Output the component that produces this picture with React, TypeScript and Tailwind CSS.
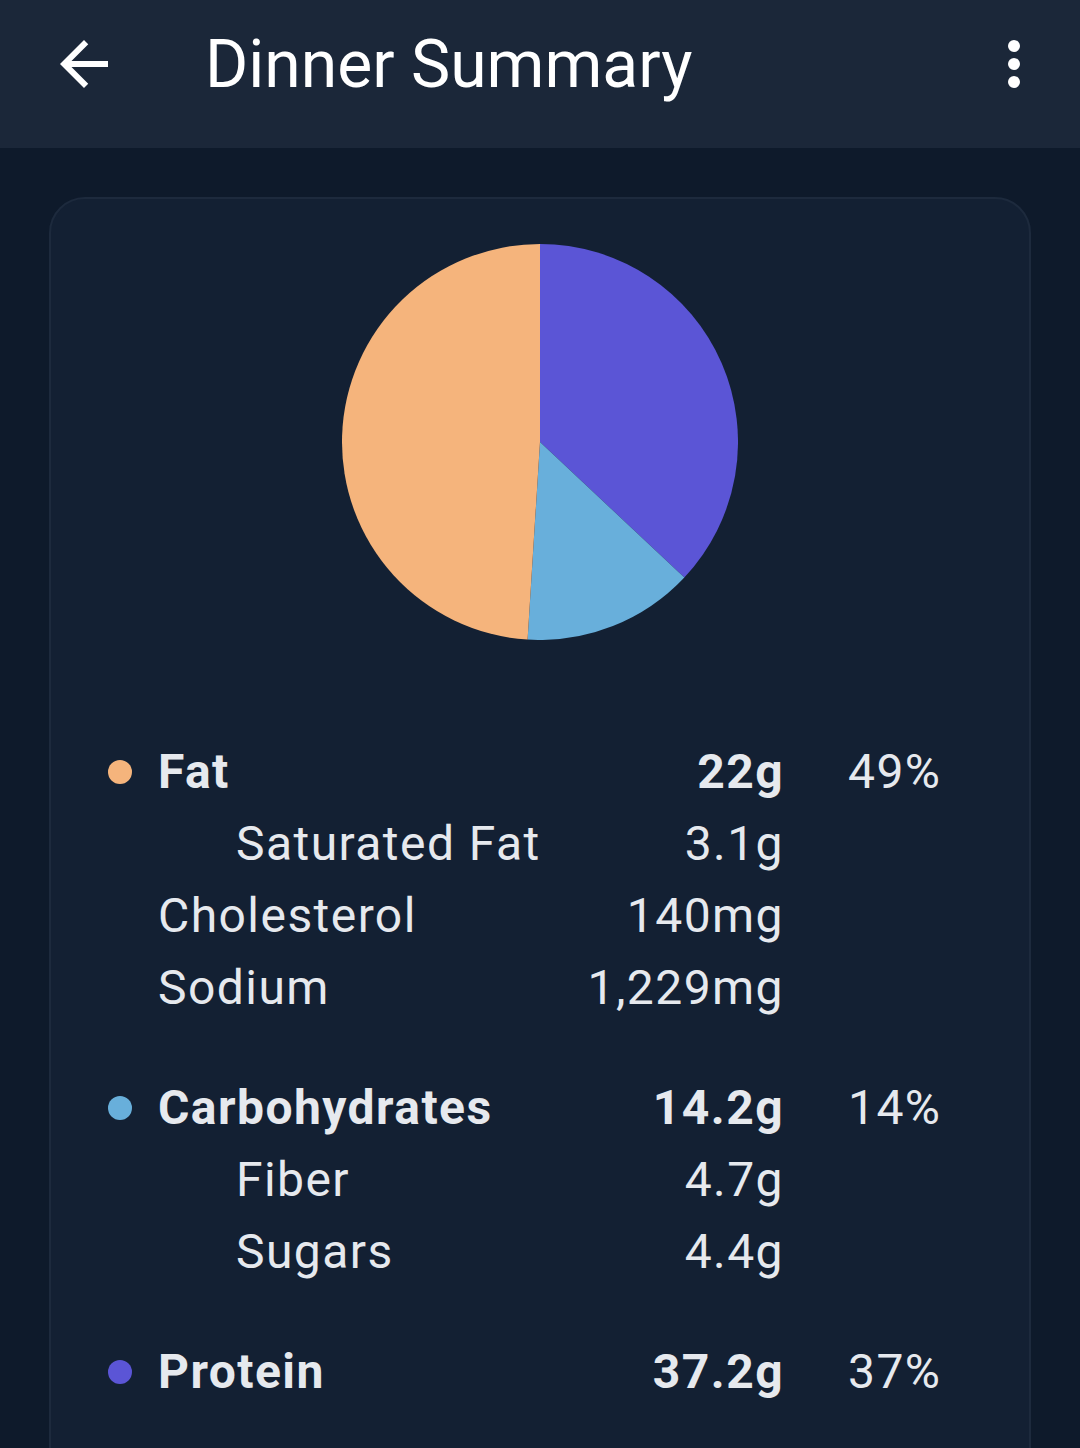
import React from 'react';

type Row = {
  label: string;
  value: string;
  pct?: string;
  dot?: string;
  bold?: boolean;
  indent?: boolean;
};

const groups: Row[][] = [
  [
    { label: 'Fat', value: '22g', pct: '49%', dot: 'bg-[#f5b47c]', bold: true },
    { label: 'Saturated Fat', value: '3.1g', indent: true },
    { label: 'Cholesterol', value: '140mg' },
    { label: 'Sodium', value: '1,229mg' },
  ],
  [
    { label: 'Carbohydrates', value: '14.2g', pct: '14%', dot: 'bg-[#68afdb]', bold: true },
    { label: 'Fiber', value: '4.7g', indent: true },
    { label: 'Sugars', value: '4.4g', indent: true },
  ],
  [{ label: 'Protein', value: '37.2g', pct: '37%', dot: 'bg-[#5b55d6]', bold: true }],
];

// pie slices, clockwise from 12 o'clock
const slices = [
  { pct: 37, color: '#5b55d6' },
  { pct: 14, color: '#68afdb' },
  { pct: 49, color: '#f5b47c' },
];

const PieChart = () => {
  const r = 198;
  const pt = (a: number) => {
    const rad = (a / 100) * Math.PI * 2;
    return [r + r * Math.sin(rad), r - r * Math.cos(rad)];
  };
  let start = 0;
  return (
    <svg width={396} height={396} viewBox="0 0 396 396">
      {slices.map((s, i) => {
        const [x1, y1] = pt(start);
        const [x2, y2] = pt(start + s.pct);
        const large = s.pct > 50 ? 1 : 0;
        start += s.pct;
        return (
          <path
            key={i}
            d={`M${r} ${r} L${x1} ${y1} A${r} ${r} 0 ${large} 1 ${x2} ${y2} Z`}
            fill={s.color}
          />
        );
      })}
    </svg>
  );
};

const NutrientRow = ({ row }: { row: Row }) => (
  <div className="flex h-[72px] items-center text-[48px] leading-[72px] tracking-[0.03em] text-[#e6e9ee]">
    <div className="flex w-[50px] shrink-0 items-center">
      {row.dot && <span className={`h-6 w-6 rounded-full ${row.dot}`} />}
    </div>
    <div className={`w-[402px] shrink-0 ${row.bold ? 'font-bold' : ''} ${row.indent ? 'pl-[78px]' : ''}`}>
      {row.label}
    </div>
    <div className={`w-[224px] shrink-0 text-right ${row.bold ? 'font-bold' : ''}`}>{row.value}</div>
    <div className="pl-[64px]">{row.pct}</div>
  </div>
);

const App = () => {
  return (
    <div className="min-h-[1448px] bg-[#0e1a2b] font-['Roboto',sans-serif]">
      <header className="h-[148px] bg-[#1b2739]">
        <div className="flex h-[128px] items-center">
          <svg className="ml-[48px] h-[72px] w-[72px]" viewBox="0 0 24 24" fill="#ffffff">
            <path d="M20 11H7.83l5.59-5.59L12 4l-8 8 8 8 1.41-1.41L7.83 13H20v-2z" />
          </svg>
          <h1 className="ml-[85px] flex-1 text-[66px] font-normal text-white">Dinner Summary</h1>
          <svg className="mr-[30px] h-[72px] w-[72px]" viewBox="0 0 24 24" fill="#ffffff">
            <circle cx="12" cy="6" r="2" />
            <circle cx="12" cy="12" r="2" />
            <circle cx="12" cy="18" r="2" />
          </svg>
        </div>
      </header>

      <div className="px-[49px] pt-[49px]">
        <div className="min-h-[1300px] rounded-[36px] border-2 border-[#1d2a3d] bg-[#132033] pt-[45px] pl-[57px]">
          <div className="flex justify-center pr-[57px]">
            <PieChart />
          </div>
          <div className="mt-[96px] flex flex-col gap-[48px]">
            {groups.map((g, i) => (
              <div key={i}>
                {g.map((row) => (
                  <NutrientRow key={row.label} row={row} />
                ))}
              </div>
            ))}
          </div>
        </div>
      </div>
    </div>
  );
};

export default App;
